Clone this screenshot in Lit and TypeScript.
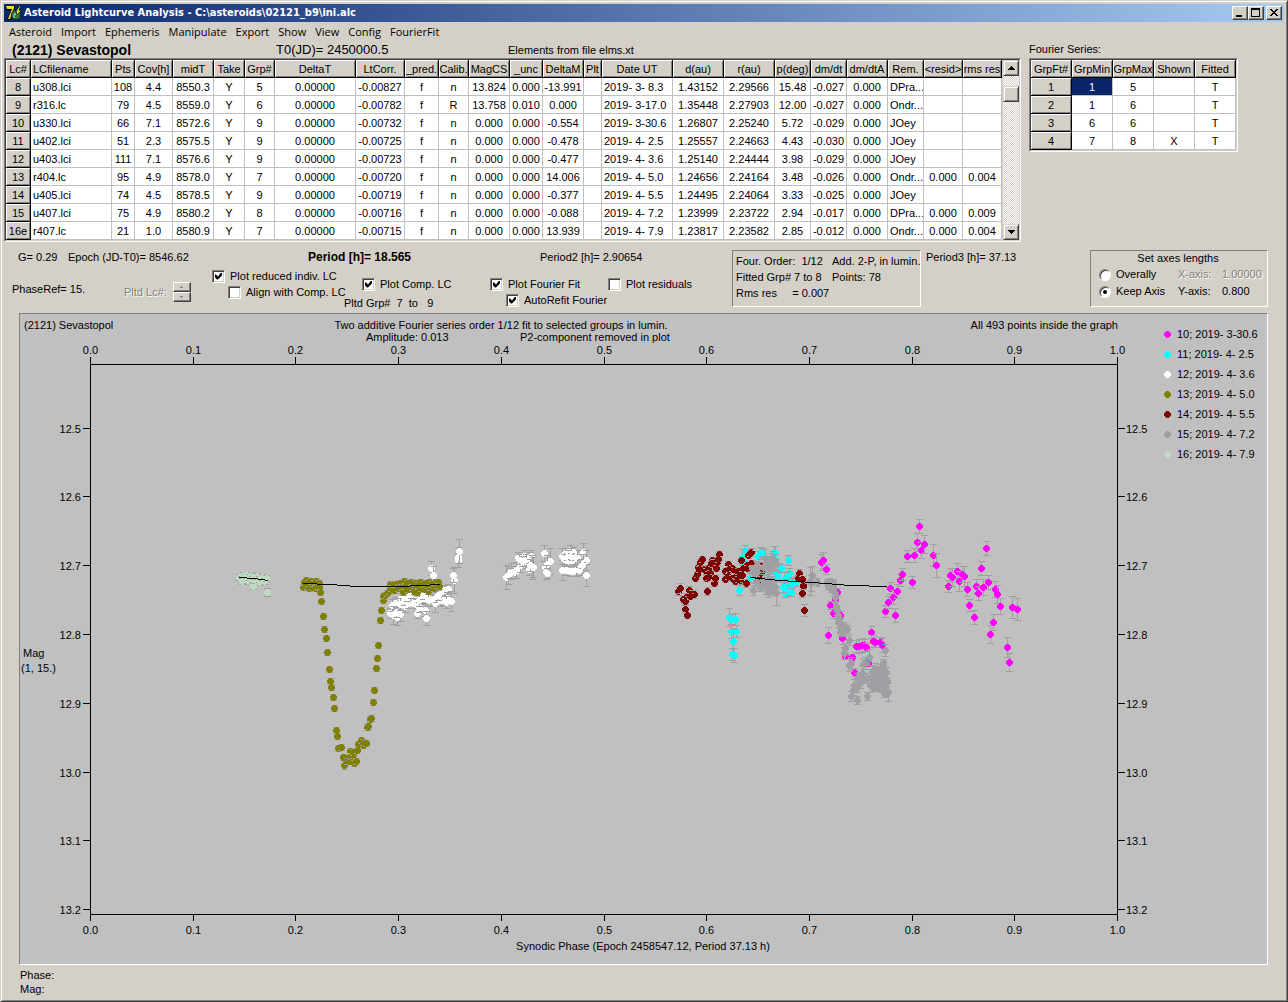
import { LitElement, html, svg, css, nothing } from "lit";
import { customElement, property, state } from "lit/decorators.js";
import { classMap } from "lit/directives/class-map.js";

interface Column {
  title: string;
  width: number;
  align: "left" | "center";
}

interface Series {
  label: string;
  color: string;
  /** Flat triples: x, y, half length of the error bar. */
  points: number[];
}

const col = (title: string, width: number, align: "left" | "center" = "center"): Column => ({ title, width, align });

const LC_COLUMNS: Column[] = [
  col("Lc#", 25), col("LCfilename", 81, "left"), col("Pts", 23), col("Cov[h]", 38), col("midT", 41),
  col("Take", 31), col("Grp#", 30), col("DeltaT", 81), col("LtCorr.", 49), col("_pred.", 34),
  col("Calib.", 30), col("MagCS", 41), col("_unc", 33), col("DeltaM", 41), col("Plt", 18),
  col("Date UT", 71, "left"), col("d(au)", 51), col("r(au)", 51), col("p(deg)", 36), col("dm/dt", 36),
  col("dm/dtA", 41), col("Rem.", 36, "left"), col("<resid>", 39), col("rms res", 39),
];

const LC_ROWS: string[][] = [
  "8|u308.lci|108|4.4|8550.3|Y|5|0.00000|-0.00827|f|n|13.824|0.000|-13.991||2019- 3- 8.3|1.43152|2.29566|15.48|-0.027|0.000|DPra...||",
  "9|r316.lc|79|4.5|8559.0|Y|6|0.00000|-0.00782|f|R|13.758|0.010|0.000||2019- 3-17.0|1.35448|2.27903|12.00|-0.027|0.000|Ondr...||",
  "10|u330.lci|66|7.1|8572.6|Y|9|0.00000|-0.00732|f|n|0.000|0.000|-0.554||2019- 3-30.6|1.26807|2.25240|5.72|-0.029|0.000|JOey||",
  "11|u402.lci|51|2.3|8575.5|Y|9|0.00000|-0.00725|f|n|0.000|0.000|-0.478||2019- 4- 2.5|1.25557|2.24663|4.43|-0.030|0.000|JOey||",
  "12|u403.lci|111|7.1|8576.6|Y|9|0.00000|-0.00723|f|n|0.000|0.000|-0.477||2019- 4- 3.6|1.25140|2.24444|3.98|-0.029|0.000|JOey||",
  "13|r404.lc|95|4.9|8578.0|Y|7|0.00000|-0.00720|f|n|0.000|0.000|14.006||2019- 4- 5.0|1.24656|2.24164|3.48|-0.026|0.000|Ondr...|0.000|0.004",
  "14|u405.lci|74|4.5|8578.5|Y|9|0.00000|-0.00719|f|n|0.000|0.000|-0.377||2019- 4- 5.5|1.24495|2.24064|3.33|-0.025|0.000|JOey||",
  "15|u407.lci|75|4.9|8580.2|Y|8|0.00000|-0.00716|f|n|0.000|0.000|-0.088||2019- 4- 7.2|1.23999|2.23722|2.94|-0.017|0.000|DPra...|0.000|0.009",
  "16e|r407.lc|21|1.0|8580.9|Y|7|0.00000|-0.00715|f|n|0.000|0.000|13.939||2019- 4- 7.9|1.23817|2.23582|2.85|-0.012|0.000|Ondr...|0.000|0.004",
].map((line) => line.split("|"));

const FT_COLUMNS: Column[] = ["GrpFt#", "GrpMin", "GrpMax", "Shown", "Fitted"].map((t) => col(t, 41));
const FT_ROWS: string[][] = [
  ["1", "1", "5", "", "T"],
  ["2", "1", "6", "", "T"],
  ["3", "6", "6", "", "T"],
  ["4", "7", "8", "X", "T"],
];

const MENU = ["Asteroid", "Import", "Ephemeris", "Manipulate", "Export", "Show", "View", "Config", "FourierFit"];

const SERIES: Series[] = [
  {
    label: "10; 2019- 3-30.6", color: "#ff00ff",
    points: [
      821,562,8, 823,560,8, 826,569,5, 837,592,4, 835,599,5, 830,605,4, 833,613,5, 840,615,4, 828,635,8,
      842,638,6, 845,656,3, 852,657,3, 854,672,4, 856,646,6, 859,646,7, 862,645,7, 864,645,6, 866,647,4,
      868,663,3, 871,632,6, 873,641,6, 875,642,5, 880,642,5, 882,645,7, 885,611,6, 888,602,6, 890,588,6,
      893,597,7, 895,615,7, 897,591,7, 900,580,6, 902,574,6, 907,556,6, 912,582,6, 914,555,7, 917,542,9,
      919,526,7, 921,550,8, 924,544,9, 933,555,11, 936,565,12, 948,586,6, 950,575,7, 952,577,9, 957,571,8,
      959,581,10, 962,574,8, 964,576,10, 967,589,7, 969,605,6, 974,617,7, 976,586,7, 978,593,7, 981,568,7,
      983,587,8, 986,548,7, 988,582,7, 990,634,9, 993,622,8, 995,589,8, 997,594,9, 1000,606,8,
      1007,647,10, 1009,662,9, 1012,607,11, 1017,609,11,
    ],
  },
  {
    label: "11; 2019- 4- 2.5", color: "#00ffff",
    points: [
      745,550,5, 742,557,8, 744,562,5, 739,590,5, 729,617,9, 735,619,6, 731,619,5, 731,631,7, 736,631,6,
      733,641,13, 732,654,6, 734,655,7, 758,556,5, 760,553,6, 762,552,4, 774,552,6, 775,553,7, 788,560,5,
      750,578,5, 752,566,6, 775,572,6, 779,571,8, 781,568,4, 789,573,5, 788,577,6, 784,579,7, 787,586,7,
      785,593,4, 789,590,5, 793,585,8, 792,583,5, 797,581,5, 783,587,5, 777,576,5, 791,592,4, 766,580,5,
    ],
  },
  {
    label: "12; 2019- 4- 3.6", color: "#ffffff",
    points: [
      390,613,5, 392,605,6, 395,603,6, 393,615,9, 397,617,8, 400,614,7, 396,612,5, 401,598,5, 400,604,6,
      405,606,6, 404,600,5, 408,603,5, 407,597,4, 411,594,4, 415,600,5, 417,605,6, 413,603,5, 417,613,5,
      419,607,5, 419,600,6, 423,598,5, 423,595,4, 428,597,5, 428,600,6, 425,610,6, 426,618,7, 433,600,5,
      435,603,9, 436,597,5, 440,600,6, 442,592,5, 444,590,5, 448,589,5, 443,600,5, 447,598,6, 446,602,6,
      438,595,5, 451,601,10, 431,568,7, 433,575,9, 454,580,13, 453,575,7, 458,560,7, 458,557,10, 459,551,12,
      506,577,12, 508,575,9, 511,571,8, 510,573,5, 515,572,6, 516,570,8, 518,557,5, 520,565,7, 519,559,5,
      524,556,6, 526,561,7, 522,561,5, 530,559,7, 531,556,6, 529,569,6, 532,567,12, 533,567,10, 530,565,6,
      544,553,8, 550,561,13, 545,567,6, 547,564,9, 546,572,7, 547,573,5, 562,570,10, 566,570,5,
      562,556,8, 565,553,5, 567,558,5, 570,550,5, 571,555,7, 569,561,5, 566,561,5, 575,558,7, 572,560,4,
      577,557,7, 573,552,5, 568,554,4, 583,552,9, 586,560,10, 583,563,9, 580,567,8, 576,570,6, 573,571,5,
      570,571,5, 564,559,5, 586,575,11, 567,557,3, 571,556,3, 575,557,3, 579,570,3, 582,565,3,
    ],
  },
  {
    label: "13; 2019- 4- 5.0", color: "#808000",
    points: [
      303,587,3, 304,582,3, 306,580,3, 307,586,3, 309,588,3, 308,583,3, 311,581,3, 312,587,3, 314,583,3,
      315,588,3, 316,581,3, 317,586,3, 319,583,3, 319,587,3, 320,592,3, 321,601,3, 323,616,3, 324,629,3,
      326,638,3, 327,652,3, 329,669,3, 330,681,3, 331,687,3, 333,697,3, 334,708,3, 336,730,3, 337,736,3,
      338,748,3, 341,747,3, 343,757,3, 344,765,4, 347,761,3, 348,757,3, 349,761,3, 350,751,3, 351,756,3,
      353,755,3, 354,763,3, 356,761,3, 353,752,3, 357,750,3, 358,744,3, 361,740,3, 363,745,3, 363,742,3,
      366,743,3, 367,727,3, 368,726,3, 370,719,3, 371,718,3, 373,702,3, 374,690,3, 376,668,3, 377,658,3,
      378,645,3, 380,620,3, 381,610,3, 383,600,3, 383,596,3, 385,595,3, 387,593,3, 389,591,3, 390,584,3,
      391,588,3, 393,584,3, 394,590,3, 396,584,3, 398,588,3, 400,583,3, 401,587,3, 403,592,3, 404,581,3,
      405,586,3, 407,583,3, 408,589,3, 411,582,3, 412,587,3, 414,591,3, 415,583,3, 417,592,3, 418,585,3,
      420,582,3, 421,588,3, 423,584,3, 425,589,3, 426,583,3, 428,591,3, 429,582,3, 430,587,3, 432,584,3,
      434,588,3, 435,582,3, 437,585,3, 438,582,3, 439,586,3,
    ],
  },
  {
    label: "14; 2019- 4- 5.5", color: "#800000",
    points: [
      678,591,4, 680,588,5, 689,590,4, 692,594,4, 694,594,4, 686,597,4, 683,599,3, 685,601,3, 690,596,3,
      685,609,4, 687,615,3, 707,591,4, 695,578,3, 697,574,3, 698,567,3, 700,562,3, 702,559,3, 703,569,3,
      706,578,3, 706,571,3, 708,568,3, 710,573,3, 708,577,3, 712,560,3, 711,563,3, 713,563,4, 716,568,3,
      717,562,3, 719,554,3, 718,559,3, 714,583,3, 715,578,3, 699,569,3, 725,571,3, 725,579,3, 728,564,3,
      728,576,3, 729,569,3, 732,568,3, 732,578,3, 734,570,3, 735,581,3, 736,576,3, 738,571,3, 740,580,4,
      738,579,3, 741,560,3, 742,575,4, 743,568,3, 746,583,4, 747,565,3, 748,555,3, 751,552,4, 750,553,3,
      747,568,3, 751,563,3, 760,565,3, 761,572,3, 761,581,3, 758,577,3, 799,573,4, 798,578,3, 803,584,3,
      803,586,3, 802,579,3, 802,593,4, 804,610,6,
    ],
  },
  {
    label: "15; 2019- 4- 7.2", color: "#a0a0a4",
    points: [
      752,568,3, 755,570,4, 757,568,3, 754,573,3, 756,573,3, 757,565,3, 753,590,5, 756,581,5, 765,558,9, 767,565,9,
      763,567,5, 770,562,9, 772,558,7, 775,562,8, 776,564,5, 768,570,8, 771,569,5, 763,585,6, 766,587,7,
      768,592,5, 769,583,5, 775,587,7, 776,593,12, 773,590,5, 760,587,4, 768,578,7, 772,582,6, 763,580,6,
      812,575,9, 810,581,14, 811,583,8, 817,582,4, 827,582,3, 829,581,3, 833,582,3, 828,586,3, 831,589,3,
      833,586,3, 834,592,4, 835,597,5, 836,606,5, 837,610,5, 838,615,4, 838,622,5, 840,623,5, 841,628,5,
      840,632,4, 845,627,5, 847,629,4, 843,632,4, 849,640,5, 845,648,5, 844,653,6, 849,665,6, 851,663,6,
      863,664,5, 865,663,6, 869,657,8, 862,673,7, 860,677,5, 857,678,5, 854,685,6, 853,690,5, 857,687,5,
      860,683,5, 851,696,5, 857,700,4, 867,696,4, 863,678,4, 867,678,5, 871,677,8, 870,685,7, 873,682,6,
      872,672,7, 875,668,5, 877,673,7, 880,670,6, 883,663,4, 883,667,6, 886,672,5, 883,675,6, 878,678,5,
      883,680,7, 887,681,8, 878,685,5, 877,687,4, 881,687,5, 873,687,4, 884,683,5, 884,693,4, 888,692,9,
      886,691,5, 885,650,6,
    ],
  },
  {
    label: "16; 2019- 4- 7.9", color: "#c0dcc0",
    points: [
      239,577,3, 241,579,3, 243,575,3, 245,577,3, 246,575,3, 242,581,3, 247,580,3, 249,577,3, 251,575,3,
      250,581,3, 252,579,3, 254,576,3, 253,586,3, 256,580,3, 257,576,3, 259,579,3, 260,582,3, 262,577,3,
      264,581,3, 266,578,3, 267,592,4,
    ],
  },
];

const FITS = [
  "239,577.5 254,578.5 268,580.5",
  "303,583.5 331,584.5 356,586.5 400,586.5 420,585.5 440,584.5",
  "750,577.5 780,580.5 813,582.5 850,585.5 887,586.5",
];

const DOT = "h3v1h1v1h1v3h-1v1h-1v1h-3v-1h-1v-1h-1v-3h1v-1h1z";

@customElement("lc-grid")
class LcGrid extends LitElement {
  @property({ attribute: false }) columns: Column[] = [];
  @property({ attribute: false }) rows: string[][] = [];
  @property({ attribute: false }) selected: [number, number] | null = null;
  @property({ type: Boolean }) scrollable = false;

  static styles = css`
    :host { display: flex; border: 1px solid; border-color: #808080 #fff #fff #808080; background: #d4d0c8; width: max-content; }
    .inner { display: flex; border: 1px solid; border-color: #404040 #d4d0c8 #d4d0c8 #404040; }
    table { border-collapse: separate; border-spacing: 0; table-layout: fixed; width: 0; background: #fff; }
    th, td {
      box-sizing: border-box; height: 18px; padding: 1px 2px 0; font-weight: 400; line-height: 16px;
      text-align: center; white-space: pre; overflow: hidden;
      border-right: 1px solid #c0c0c0; border-bottom: 1px solid #c0c0c0;
    }
    .center { padding: 1px 0 0; }
    .left { text-align: left; }
    th.center, th.left { text-align: center; }
    th.name { text-align: left; }
    th {
      background: #d4d0c8; border-color: #000;
      box-shadow: inset 1px 1px #fff, inset -1px -1px #808080;
    }
    .picked { background: #0a246a; color: #fff; }
    .bar { display: flex; flex-direction: column; width: 16px; margin-left: 1px;
      background: repeating-conic-gradient(#fff 0 25%, #d4d0c8 0 50%) 0 0 / 2px 2px; }
    .arrow, .thumb { box-sizing: border-box; width: 16px; height: 16px; padding: 0; background: #d4d0c8;
      border: 1px solid; border-color: #d4d0c8 #404040 #404040 #d4d0c8; box-shadow: inset 1px 1px #fff, inset -1px -1px #808080; }
    .arrow { display: grid; place-items: center; }
    .track { flex: 1; padding-top: 10px; }
  `;

  render() {
    return html`
      <div class="inner">
        <table>
          <colgroup>${this.columns.map((c) => html`<col style="width:${c.width}px">`)}</colgroup>
          <thead>
            <tr>${this.columns.map((c) => html`<th scope="col" class=${classMap({ [c.align]: true, name: c.title === "LCfilename" })}>${c.title}</th>`)}</tr>
          </thead>
          <tbody>
            ${this.rows.map((row, r) => html`<tr>${row.map((text, i) => i === 0
              ? html`<th scope="row" class="center">${text}</th>`
              : html`<td class=${classMap({
                  [this.columns[i].align]: true,
                  picked: !!this.selected && this.selected[0] === r && this.selected[1] === i,
                })}>${text}</td>`)}</tr>`)}
          </tbody>
        </table>
        ${this.scrollable ? html`
          <div class="bar">
            <button class="arrow" aria-label="Scroll up"><svg width="7" height="4" viewBox="0 0 7 4" shape-rendering="crispEdges"><path d="M3 0h1v1h1v1h1v1h1v1H0V3h1V2h1V1h1z"/></svg></button>
            <div class="track"><div class="thumb"></div></div>
            <button class="arrow" aria-label="Scroll down"><svg width="7" height="4" viewBox="0 0 7 4" shape-rendering="crispEdges"><path d="M0 0h7v1H6v1H5v1H4v1H3V3H2V2H1V1H0z"/></svg></button>
          </div>` : nothing}
      </div>`;
  }
}

@customElement("lc-check")
class LcCheck extends LitElement {
  @property() label = "";
  @property({ type: Boolean }) checked = false;

  static styles = css`
    :host { display: block; }
    label { display: flex; align-items: center; gap: 5px; height: 16px; white-space: nowrap; }
    input {
      appearance: none; box-sizing: border-box; flex: none; display: grid; place-items: center; width: 13px; height: 13px; margin: 0; background: #fff;
      border: 1px solid; border-color: #808080 #fff #fff #808080; box-shadow: inset 1px 1px #404040, inset -1px -1px #d4d0c8;
    }
    input:checked::after {
      content: ""; width: 7px; height: 7px; background: #000;
      clip-path: polygon(0 2px, 1px 2px, 3px 4px, 6px 0, 7px 0, 7px 3px, 3px 7px, 2px 7px, 0 5px);
    }
  `;

  render() {
    return html`<label><input type="checkbox" .checked=${this.checked}>${this.label}</label>`;
  }
}

@customElement("lc-plot")
class LcPlot extends LitElement {
  static styles = css`
    :host { display: block; background: #c0c0c0; border: 1px solid; border-color: #808080 #fff #fff #808080; }
    svg { display: block; width: 100%; height: auto; }
    text { font-family: "Liberation Sans", Arial, sans-serif; font-size: 11px; fill: #000; white-space: pre; }
    .middle { text-anchor: middle; }
    .end { text-anchor: end; }
    .axis { fill: none; stroke: #000; shape-rendering: crispEdges; }
    .fit { fill: none; stroke: #000; shape-rendering: crispEdges; }
    .error { fill: none; stroke: #a0a0a4; }
    .marks { shape-rendering: crispEdges; }
  `;

  private point(x: number, y: number, e: number, color: string) {
    return svg`
      <path class="error" d="M${x - 3} ${y - e + 0.5}h7M${x - 3} ${y + e + 0.5}h7M${x + 0.5} ${y - e}v${2 * e}"/>
      <path fill=${color} d="M${x - 1} ${y - 3}${DOT}"/>`;
  }

  private triples(s: Series) {
    const out = [];
    for (let i = 0; i < s.points.length; i += 3) {
      out.push(this.point(s.points[i], s.points[i + 1], s.points[i + 2], s.color));
    }
    return out;
  }

  render() {
    const xs = Array.from({ length: 11 }, (_, i) => ({ x: Math.round(90 + 102.7 * i) + 0.5, label: (i / 10).toFixed(1) }));
    const ys = Array.from({ length: 8 }, (_, i) => ({ y: Math.floor(428 + 68.8 * i) + 0.5, label: (12.5 + i / 10).toFixed(1) }));
    return html`
      <svg viewBox="20 314 1247 650" role="img" aria-label="Composite lightcurve">
        <text x="24" y="329">(2121) Sevastopol</text>
        <text class="middle" x="501" y="329">Two additive Fourier series order 1/12 fit to selected groups in lumin.</text>
        <text x="366" y="341">Amplitude: 0.013</text>
        <text x="520" y="341">P2-component removed in plot</text>
        <text class="end" x="1118" y="329">All 493 points inside the graph</text>
        <path class="axis" d="M90.5 357V921M1117.5 357V921M90 364.5H1118M90 914.5H1118"/>
        ${xs.map((t) => svg`
          <path class="axis" d="M${t.x} 357v7M${t.x} 914v7"/>
          <text class="middle" x=${t.x} y="354">${t.label}</text>
          <text class="middle" x=${t.x} y="934">${t.label}</text>`)}
        ${ys.map((t) => svg`
          <path class="axis" d="M83 ${t.y}h7M1118 ${t.y}h7"/>
          <text class="end" x="81" y=${t.y + 4}>${t.label}</text>
          <text x="1126" y=${t.y + 4}>${t.label}</text>`)}
        <text x="23" y="657">Mag</text>
        <text x="21" y="672">(1, 15.)</text>
        <text class="middle" x="643" y="950">Synodic Phase (Epoch 2458547.12, Period 37.13 h)</text>
        <g class="marks">${SERIES.map((s) => this.triples(s))}</g>
        ${FITS.map((p) => svg`<polyline class="fit" points=${p}/>`)}
        ${SERIES.map((s, i) => svg`
          <path class="marks" fill=${s.color} d="M1166 ${331 + 20 * i}${DOT}"/>
          <text x="1177" y=${338 + 20 * i}>${s.label}</text>`)}
      </svg>`;
  }
}

@customElement("app-root")
class AppRoot extends LitElement {
  @state() private axisMode = "keep";

  static styles = css`
    :host {
      display: flex; flex-direction: column; box-sizing: border-box; min-height: 100vh; padding: 3px;
      background: #d4d0c8; color: #000; font: 11px/16px "Liberation Sans", Arial, sans-serif;
      border: 1px solid; border-color: #d4d0c8 #404040 #404040 #d4d0c8;
      box-shadow: inset 1px 1px #fff, inset -1px -1px #808080;
    }
    h1, h2, p { margin: 0; font: inherit; white-space: pre; }
    .title { display: flex; align-items: center; height: 18px; padding: 0 2px; color: #fff;
      background: linear-gradient(90deg, #0a246a, #a6caf0); }
    .title h1 { flex: 1; padding-left: 2px; font: bold 11px/18px "DejaVu Sans Condensed", Tahoma, sans-serif; }
    .window-button { display: block; box-sizing: border-box; width: 16px; height: 14px; padding: 0; background: #d4d0c8; border: 1px solid;
      border-color: #fff #404040 #404040 #fff; box-shadow: inset -1px -1px #808080; }
    .window-button svg { display: block; }
    .close { margin-left: 2px; }
    .menu { display: flex; height: 20px; }
    .menu button { border: 0; background: none; padding: 0 4px 0 5px; color: #000; font: 11px/20px "Open Sans", Tahoma, sans-serif; }
    .tables { display: flex; gap: 8px; }
    .heading { display: grid; grid-template-columns: 264px 232px 1fr; height: 16px; padding-left: 8px; }
    .name { font-weight: 700; font-size: 14px; }
    .epoch { font-size: 13px; }
    .series-title { height: 16px; line-height: 14px; }
    .controls { display: grid; grid-template-columns: 728px 190px 1fr 178px; padding: 8px 16px 0 0; }
    .values { display: grid; grid-template-columns: 50px 240px 232px auto; padding-left: 14px; margin-top: -1px; }
    .period { font-weight: 700; font-size: 12px; }
    .options { display: grid; grid-template-columns: 112px 88px 132px 146px 118px auto; padding: 3px 0 0 8px; }
    .low { padding-top: 8px; }
    .indent { padding-left: 16px; }
    .comp { padding-left: 18px; padding-bottom: 3px; }
    .ref { padding-top: 13px; }
    .picker { display: flex; gap: 6px; padding-top: 14px; align-items: center; height: 20px; }
    .disabled { color: #808080; text-shadow: 1px 1px #fff; }
    .spin { display: flex; flex-direction: column; }
    .spin button { display: grid; place-items: center; box-sizing: border-box; width: 18px; height: 10px; padding: 0; background: #d4d0c8; border: 1px solid;
      border-color: #fff #404040 #404040 #fff; box-shadow: inset -1px -1px #808080; }
    .box { box-sizing: border-box; height: 57px; border: 1px solid; border-color: #808080 #fff #fff #808080; }
    .info { display: grid; grid-template-columns: 96px auto; align-content: start; width: 189px; padding: 2px 0 0 3px; }
    .period3 { padding-left: 4px; margin-top: -1px; }
    .axes { padding: 0 0 0 8px; }
    .axes h2 { text-align: center; padding-right: 10px; line-height: 15px; }
    .axes-row { display: grid; grid-template-columns: 79px 44px auto; line-height: 17px; }
    .radio { display: flex; align-items: center; gap: 5px; }
    .radio input { appearance: none; box-sizing: border-box; display: grid; place-items: center; width: 12px; height: 12px; margin: 0; border-radius: 50%;
      background: #fff; border: 1px solid; border-color: #808080 #fff #fff #808080; box-shadow: inset 1px 1px #404040; }
    .radio input:checked::after { content: ""; width: 4px; height: 4px; border-radius: 50%; background: #000; }
    .plot { margin: 2px 16px 0 15px; }
    .status { padding: 3px 16px 0; line-height: 14px; }
  `;

  private radio(value: string, label: string) {
    return html`<label class="radio"><input type="radio" name="axis" value=${value} .checked=${this.axisMode === value}
      @change=${() => { this.axisMode = value; }}>${label}</label>`;
  }

  render() {
    return html`
      <header class="title">
        <svg width="16" height="16" viewBox="0 0 16 16" aria-hidden="true">
          <path d="M0 1h9v3L5 15H1L5 5H0z" fill="#000"/>
          <path d="M0 1h8v2L4 14H2L6 4H1z" fill="#e8e020"/>
          <circle cx="10" cy="10" r="5" fill="#123"/>
          <circle cx="10" cy="10" r="4" fill="#2f7a3c"/>
          <path d="M8 8h3v2H9v3H7z" fill="#7fc08a"/>
          <path d="M10 6l4-6 1 1-2 4 2 1-4 4z" fill="#c8e020" stroke="#222"/>
        </svg>
        <h1>Asteroid Lightcurve Analysis - C:\\asteroids\\02121_b9\\ini.alc</h1>
        <button class="window-button" aria-label="Minimize"><svg width="14" height="12"><path d="M3 8h6v2H3z"/></svg></button>
        <button class="window-button" aria-label="Maximize"><svg width="14" height="12"><path d="M2 1h9v9H2zM3 3v6h7V3z" fill-rule="evenodd"/></svg></button>
        <button class="window-button close" aria-label="Close"><svg width="14" height="12" shape-rendering="crispEdges"><path d="M3 2h2v1h1v1h2V3h1V2h2v1h-1v1H9v1H8v1h1v1h1v1h1v1H9V8H8V7H6v1H5v1H3V8h1V7h1V6h1V5H5V4H4V3H3z"/></svg></button>
      </header>
      <nav class="menu">${MENU.map((m) => html`<button>${m}</button>`)}</nav>

      <div class="tables">
        <section>
          <div class="heading">
            <p class="name">(2121) Sevastopol</p>
            <p class="epoch">T0(JD)= 2450000.5</p>
            <p>Elements from file elms.xt</p>
          </div>
          <lc-grid scrollable .columns=${LC_COLUMNS} .rows=${LC_ROWS}></lc-grid>
        </section>
        <section>
          <h2 class="series-title">Fourier Series:</h2>
          <lc-grid .columns=${FT_COLUMNS} .rows=${FT_ROWS} .selected=${[0, 1]}></lc-grid>
        </section>
      </div>

      <section class="controls">
        <div>
          <div class="values">
            <p>G= 0.29</p>
            <p>Epoch (JD-T0)= 8546.62</p>
            <p class="period">Period [h]= 18.565</p>
            <p>Period2 [h]= 2.90654</p>
          </div>
          <div class="options">
            <p class="ref">PhaseRef= 15.</p>
            <div class="picker">
              <span class="disabled">Pltd Lc#:</span>
              <div class="spin">
                <button disabled aria-label="Next lightcurve"><svg width="3" height="2"><path d="M1 0h1v1h1v1H0V1h1z" fill="#808080"/></svg></button>
                <button disabled aria-label="Previous lightcurve"><svg width="3" height="2"><path d="M0 0h3v1H2v1H1V1H0z" fill="#808080"/></svg></button>
              </div>
            </div>
            <div>
              <lc-check checked label="Plot reduced indiv. LC"></lc-check>
              <lc-check class="indent" label="Align with Comp. LC"></lc-check>
            </div>
            <div class="low">
              <lc-check class="comp" checked label="Plot Comp. LC"></lc-check>
              <p>Pltd Grp#  7  to   9</p>
            </div>
            <div class="low">
              <lc-check checked label="Plot Fourier Fit"></lc-check>
              <lc-check class="indent" checked label="AutoRefit Fourier"></lc-check>
            </div>
            <div class="low"><lc-check label="Plot residuals"></lc-check></div>
          </div>
        </div>
        <div class="box info">
          <p>Four. Order:  1/12</p><p>Add. 2-P, in lumin.</p>
          <p>Fitted Grp# 7 to 8</p><p>Points: 78</p>
          <p>Rms res     = 0.007</p>
        </div>
        <p class="period3">Period3 [h]= 37.13</p>
        <div class="box axes">
          <h2>Set axes lengths</h2>
          <div class="axes-row">${this.radio("overall", "Overally")}<span class="disabled">X-axis:</span><span class="disabled">1.00000</span></div>
          <div class="axes-row">${this.radio("keep", "Keep Axis")}<span>Y-axis:</span><span>0.800</span></div>
        </div>
      </section>

      <lc-plot class="plot"></lc-plot>
      <footer class="status"><p>Phase:</p><p>Mag:</p></footer>
    `;
  }
}
